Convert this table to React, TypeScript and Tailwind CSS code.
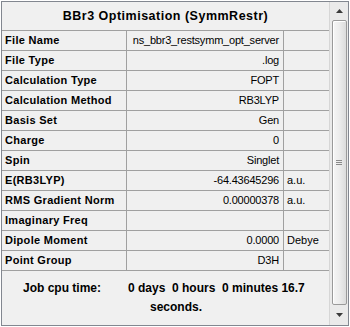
const rows: { label: string; value: string; unit?: string }[] = [
  { label: 'File Name', value: 'ns_bbr3_restsymm_opt_server' },
  { label: 'File Type', value: '.log' },
  { label: 'Calculation Type', value: 'FOPT' },
  { label: 'Calculation Method', value: 'RB3LYP' },
  { label: 'Basis Set', value: 'Gen' },
  { label: 'Charge', value: '0' },
  { label: 'Spin', value: 'Singlet' },
  { label: 'E(RB3LYP)', value: '-64.43645296', unit: 'a.u.' },
  { label: 'RMS Gradient Norm', value: '0.00000378', unit: 'a.u.' },
  { label: 'Imaginary Freq', value: '' },
  { label: 'Dipole Moment', value: '0.0000', unit: 'Debye' },
  { label: 'Point Group', value: 'D3H' },
];

const ScrollBar = () => (
  <div className="flex h-full w-[19px] flex-col border-l border-[#d6d6d6] bg-[#eaeaea]">
    {/* up arrow */}
    <div className="flex h-[18px] items-center justify-center">
      <svg width="7" height="4" viewBox="0 0 7 4">
        <path d="M3.5 0 L7 4 L0 4 Z" fill="#3a3a3a" />
      </svg>
    </div>
    {/* thumb */}
    <div className="mx-auto flex h-[285px] w-[15px] items-center justify-center rounded-[2px] border border-[#9a9a9a] bg-gradient-to-r from-[#f6f6f6] via-[#ececec] to-[#dcdcdc] shadow-[inset_1px_1px_0_#ffffff]">
      <div className="flex flex-col gap-[1px]">
        <div className="h-[1px] w-[6px] bg-[#8a8a8a]" />
        <div className="h-[1px] w-[6px] bg-[#8a8a8a]" />
        <div className="h-[1px] w-[6px] bg-[#8a8a8a]" />
      </div>
    </div>
    {/* down arrow */}
    <div className="flex flex-1 items-center justify-center">
      <svg width="7" height="4" viewBox="0 0 7 4">
        <path d="M0 0 L7 0 L3.5 4 Z" fill="#3a3a3a" />
      </svg>
    </div>
  </div>
);

export default function App() {
  return (
    <div className="h-[327px] w-[350px] bg-white pl-[1px] pt-[1px] text-[11px] text-black [font-family:'Liberation_Sans',Arial,sans-serif]">
      <div className="flex h-[325px] w-[348px] border border-[#828790] bg-[#f0f0f0]">
        <div className="flex w-[327px] flex-col">
          <div className="flex h-[29px] items-center justify-center border-b border-[#a0a0a0] text-[12.5px] font-bold tracking-[0.5px]">
            BBr3 Optimisation (SymmRestr)
          </div>
          {rows.map((row) => (
            <div key={row.label} className="flex h-[20px] border-b border-[#a0a0a0]">
              <div className="flex w-[125px] items-center border-r border-[#a0a0a0] pl-[3px] font-bold tracking-[0.3px]">
                {row.label}
              </div>
              <div className="flex w-[157px] items-center justify-end border-r border-[#a0a0a0] pr-[4px] tracking-[-0.2px]">
                {row.value}
              </div>
              <div className="flex w-[45px] items-center pl-[3px]">{row.unit}</div>
            </div>
          ))}
          <div className="flex flex-1 pt-[8px] text-[12px] font-bold leading-[19px]">
            <div className="w-[126px] pl-[21px]">Job cpu time:</div>
            <div>
              <div className="whitespace-pre">{'0 days  0 hours  0 minutes 16.7'}</div>
              <div className="pl-[22px]">seconds.</div>
            </div>
          </div>
        </div>
        <ScrollBar />
      </div>
    </div>
  );
}
